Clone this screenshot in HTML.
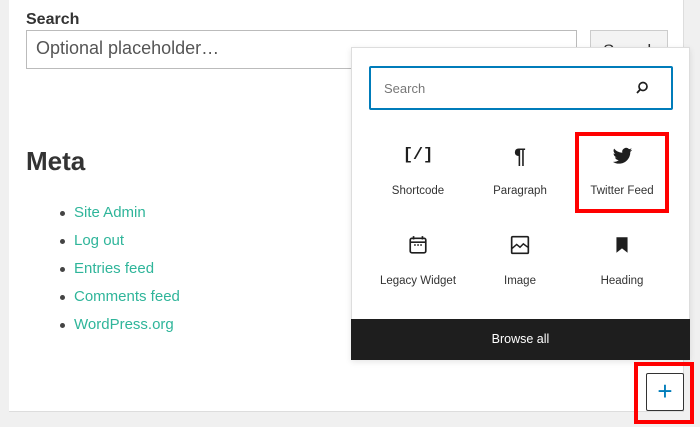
<!DOCTYPE html>
<html><head><meta charset="utf-8"><style>
*{box-sizing:border-box;margin:0;padding:0}
body{width:700px;height:427px;background:#f0f0f0;font-family:"Liberation Sans",sans-serif;position:relative;overflow:hidden}
.panel{position:absolute;left:9px;top:0;width:675px;height:412px;background:#fff;border-right:1px solid #ddd;border-bottom:1px solid #ddd}
.abs{position:absolute}
.lbl{left:26px;top:11px;font-size:16px;font-weight:bold;color:#333}
.inp{left:26px;top:30px;width:551px;height:39px;border:1px solid #bbb;font-size:18px;color:#555;padding:7px 9px}
.btn{left:590px;top:30px;width:78px;height:40px;background:#f3f3f3;border:1px solid #ccc;font-size:17px;color:#333;padding:10px 12px}
.meta{left:26px;top:146px;font-size:26px;font-weight:bold;color:#333}
ul{position:absolute;left:58px;top:204px;list-style:none}
li{height:28px;font-size:15px;color:#2fb59a;position:relative;padding-left:16px}
li:before{content:"";position:absolute;left:2px;top:7px;width:5px;height:5px;border-radius:50%;background:#444}
.pop{left:351px;top:47px;width:339px;height:313px;background:#fff;border:1px solid #ddd;box-shadow:0 2px 6px rgba(0,0,0,.1)}
.sf{left:369px;top:66px;width:304px;height:44px;border:2px solid #007cba;border-radius:2px;font-size:13px;color:#777;padding:13px 13px}
.it{width:100px;text-align:center;font-size:11.5px;color:#333}
.it svg{display:block;margin:0 auto}
.browse{left:351px;top:319px;width:339px;height:41px;background:#1e1e1e;color:#fff;font-size:12.5px;text-align:center;line-height:41px}
.red{border:4px solid #f00}
.plus{left:646px;top:373px;width:38px;height:38px;border:1px solid #333;border-radius:2px;background:#fff;color:#007cba;font-size:26px;text-align:center;line-height:34px;font-weight:300}
</style></head><body>
<div class="panel"></div>
<div class="abs lbl">Search</div>
<div class="abs btn">Search</div>
<div class="abs inp">Optional placeholder…</div>
<div class="abs meta">Meta</div>
<ul><li>Site Admin</li><li>Log out</li><li>Entries feed</li><li>Comments feed</li><li>WordPress.org</li></ul>
<div class="abs pop"></div>
<div class="abs sf">Search</div>
<svg class="abs" style="left:634px;top:80px" width="16" height="16" viewBox="0 0 16 16"><circle cx="9" cy="6.5" r="4" fill="none" stroke="#1e1e1e" stroke-width="1.7"/><path d="M6.3 9.4L3 13" stroke="#1e1e1e" stroke-width="1.8"/></svg>
<div class="abs it" style="left:368px;top:146px"><div style="font-size:17px;font-weight:bold;height:22px;color:#1e1e1e;font-family:'Liberation Mono',monospace">[/]</div><div style="margin-top:17px">Shortcode</div></div>
<div class="abs it" style="left:470px;top:145px"><div style="font-size:21px;font-weight:bold;height:23px;color:#1e1e1e">¶</div><div style="margin-top:17px">Paragraph</div></div>
<div class="abs it" style="left:572px;top:147px"><svg width="21" height="19" viewBox="0 0 24 20"><path fill="#1e1e1e" d="M23 2.3c-.8.4-1.7.6-2.6.7.9-.6 1.6-1.4 2-2.5-.9.5-1.9.9-2.9 1.1A4.5 4.5 0 0 0 11.8 5.7 12.9 12.9 0 0 1 2.4 1 4.5 4.5 0 0 0 3.8 7c-.7 0-1.4-.2-2-.6 0 2.2 1.6 4 3.6 4.5-.7.2-1.4.2-2 .1.6 1.8 2.3 3.1 4.3 3.1A9.1 9.1 0 0 1 1 16.1 12.8 12.8 0 0 0 8 18.2c8.3 0 12.9-6.9 12.9-12.9v-.6c.9-.7 1.6-1.5 2.1-2.4z"/></svg><div style="margin-top:19px">Twitter Feed</div></div>
<div class="abs it" style="left:368px;top:235px"><svg width="20" height="20" viewBox="0 0 18 18"><rect x="2" y="3" width="14" height="13" rx="1.5" fill="none" stroke="#1e1e1e" stroke-width="1.5"/><path d="M2 6.5h14M5 1v3M13 1v3" stroke="#1e1e1e" stroke-width="1.5"/><path d="M5.5 9h1.5M8.3 9h1.5M11 9h1.5" stroke="#1e1e1e" stroke-width="1.3"/></svg><div style="margin-top:20px">Legacy Widget</div></div>
<div class="abs it" style="left:470px;top:235px"><svg width="20" height="20" viewBox="0 0 18 18"><rect x="1.5" y="1.5" width="15" height="15" rx="1" fill="none" stroke="#1e1e1e" stroke-width="1.5"/><path d="M2 12l4-3.5 3 2.5 3-3 4 3" fill="none" stroke="#1e1e1e" stroke-width="1.3"/></svg><div style="margin-top:20px">Image</div></div>
<div class="abs it" style="left:572px;top:235px"><svg width="20" height="20" viewBox="0 0 18 18"><path d="M4 2h10v14l-5-4-5 4z" fill="#1e1e1e"/></svg><div style="margin-top:20px">Heading</div></div>
<div class="abs red" style="left:575px;top:132px;width:94px;height:81px"></div>
<div class="abs browse">Browse all</div>
<div class="abs red" style="left:634px;top:362px;width:60px;height:62px"></div>
<div class="abs plus">+</div>
</body></html>
